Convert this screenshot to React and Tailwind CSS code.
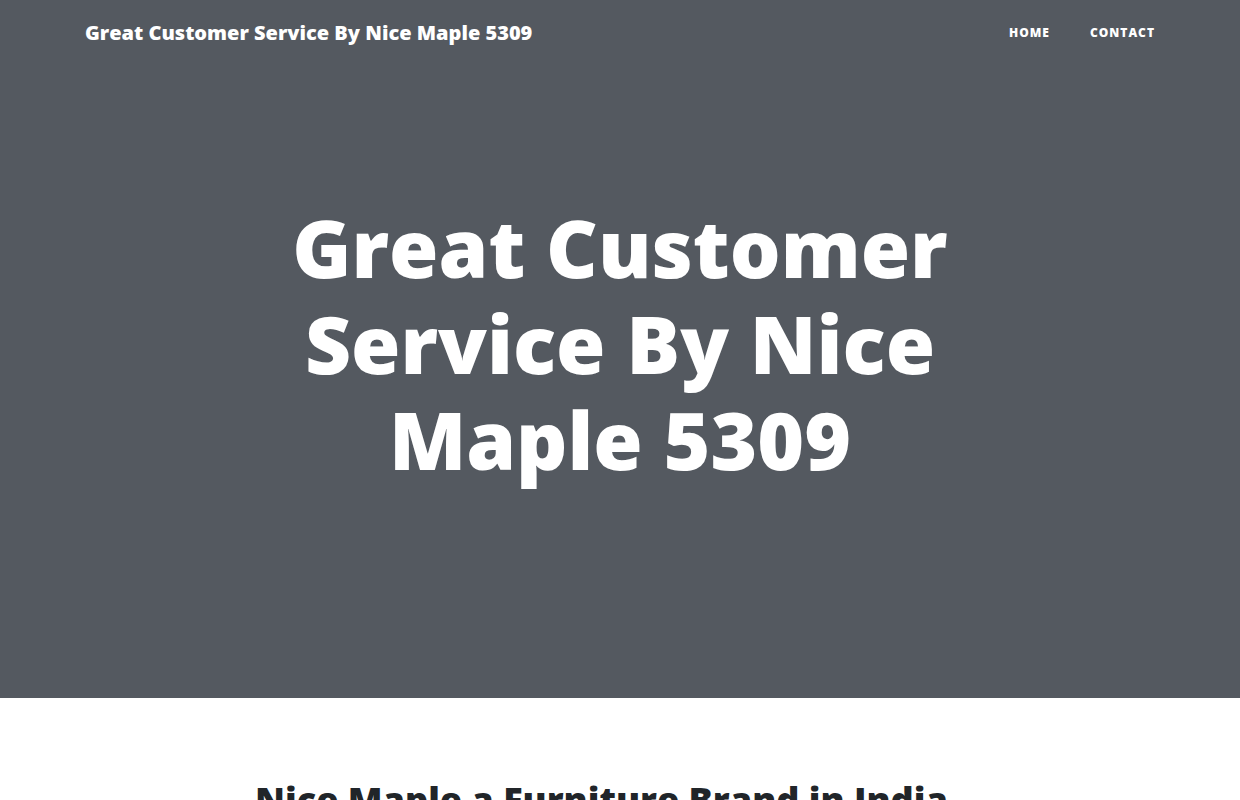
import React from 'react';

const links = ['Home', 'Contact'];

const App = () => {
  return (
    <div className="min-h-screen bg-white font-['Open_Sans',sans-serif] text-[#212529]">
      {/* Masthead: nav sits on the grey hero */}
      <header className="h-[698px] bg-[#545960] text-white">
        <nav className="h-16 pt-0.5 px-[85px] flex items-center justify-between">
          <a className="text-[20px] font-extrabold leading-none">Great Customer Service By Nice Maple 5309</a>
          <ul className="flex items-center -mr-5">
            {links.map((l) => (
              <li key={l}>
                <a className="block px-5 text-[12px] font-extrabold uppercase tracking-[1px]">{l}</a>
              </li>
            ))}
          </ul>
        </nav>
        <div className="w-[730px] mx-auto pt-[135px] text-center">
          <h1 className="text-[80px] font-extrabold leading-[1.2]">Great Customer Service By Nice Maple 5309</h1>
        </div>
      </header>

      {/* Post preview */}
      <main className="w-[730px] mx-auto pt-[80px]">
        <a>
          <h2 className="text-[36px] font-extrabold leading-[1.2] mb-2.5">Nice Maple a Furniture Brand in India</h2>
        </a>
      </main>
    </div>
  );
};

export default App;
